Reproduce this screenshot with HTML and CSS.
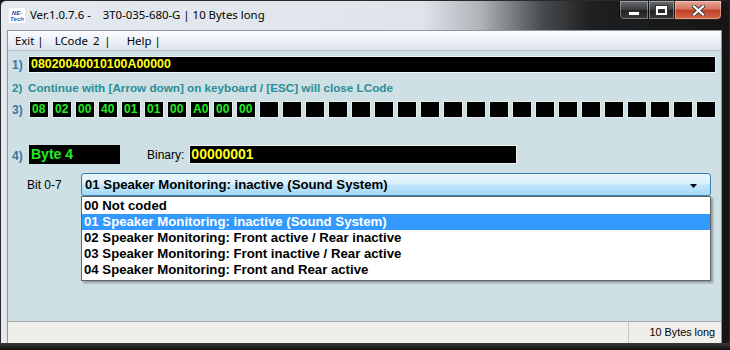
FILE: index.html
```html
<!DOCTYPE html>
<html>
<head>
<meta charset="utf-8">
<link rel="stylesheet" href="styles.css">
</head>
<body>
<div class="win">
  <div class="titlebar">
    <div class="logo"><span class="l1">NE-</span><span class="l2">Tech</span></div>
    <div class="title">Ver.1.0.7.6 -&nbsp;&nbsp;&nbsp; 3T0-035-680-G | 10 Bytes long</div>
    <div class="capbtns">
      <div class="cb cb-min"><span class="g-min"></span></div>
      <div class="cb cb-max"><span class="g-max"></span></div>
      <div class="cb cb-close">
        <svg width="13" height="11" viewBox="0 0 13 11"><path d="M2 1.5 L11 9.5 M11 1.5 L2 9.5" stroke="#3a3a3a" stroke-width="4" stroke-linecap="square"/><path d="M2 1.5 L11 9.5 M11 1.5 L2 9.5" stroke="#ffffff" stroke-width="2.2" stroke-linecap="square"/></svg>
      </div>
    </div>
  </div>
  <div class="client">
    <div class="menubar">
      <span class="mi mi-exit">Exit |</span>
      <span class="mi mi-lcode">LCode 2 |</span>
      <span class="mi">Help |</span>
    </div>
    <div class="content">
      <div class="row r1">
        <span class="lbl">1)</span>
        <div class="field hex">08020040010100A00000</div>
      </div>
      <div class="row r2">
        <span class="lbl info">2)</span>
        <span class="info">Continue with [Arrow down] on keyboard / [ESC] will close LCode</span>
      </div>
      <div class="row r3">
        <span class="lbl">3)</span>
        <div class="bytes" id="bytes"></div>
      </div>
      <div class="row r4">
        <span class="lbl l4">4)</span>
        <div class="bytebox">Byte 4</div>
        <span class="binlbl">Binary:</span>
        <div class="field binfield">00000001</div>
      </div>
      <div class="row r5">
        <span class="bitlbl">Bit 0-7</span>
        <div class="combo">
          <span>01 Speaker Monitoring: inactive (Sound System)</span>
          <svg class="arrow" width="7" height="4" viewBox="0 0 7 4"><path d="M0 0 H7 L3.5 4 Z" fill="#000"/></svg>
          <div class="list">
            <div class="opt">00 Not coded</div>
            <div class="opt sel">01 Speaker Monitoring: inactive (Sound System)</div>
            <div class="opt">02 Speaker Monitoring: Front active / Rear inactive</div>
            <div class="opt">03 Speaker Monitoring: Front inactive / Rear active</div>
            <div class="opt">04 Speaker Monitoring: Front and Rear active</div>
          </div>
        </div>
      </div>
    </div>
    <div class="statusbar">
      <div class="sp1"></div>
      <div class="sp2">10 Bytes long</div>
    </div>
  </div>
  <div class="bottomframe"></div>
</div>
<script src="app.js"></script>
</body>
</html>
```
FILE: app.js
```js
var vals = ["08","02","00","40","01","01","00","A0","00","00"];
var c = document.getElementById("bytes");
for (var i = 0; i < 30; i++) {
  var d = document.createElement("div");
  d.className = "bx";
  d.textContent = vals[i] || "";
  c.appendChild(d);
}
```
FILE: styles.css
```css
html, body { margin: 0; padding: 0; }
body { width: 730px; height: 350px; background: #1a1a1a; overflow: hidden; }

.win {
  width: 730px; height: 350px;
  display: flex; flex-direction: column;
  box-sizing: border-box;
  border: 1px solid #2a2a2a;
  border-radius: 6px 6px 0 0;
  background: linear-gradient(to right, #e3e9ef 0, #dfe5eb 420px, #aeb3b8 480px, #4a4d50 540px, #1e1f20 590px, #151515 100%);
}

.titlebar {
  height: 29px; flex: none;
  display: flex; align-items: flex-start;
  position: relative;
}
.logo {
  width: 16px; height: 15px;
  margin: 7px 0 0 8px;
  background: #fff;
  display: flex; flex-direction: column; align-items: center; justify-content: center;
  font-family: "Liberation Sans", sans-serif; font-style: italic; font-weight: bold;
  font-size: 6px; line-height: 6px; color: #1f3fb0;
}
.logo .l2 { color: #2a5ac8; }
.title {
  margin: 6px 0 0 5px;
  font-family: "Noto Sans", sans-serif; font-size: 11.4px; line-height: 16px;
  color: #000;
  white-space: nowrap;
}
.capbtns {
  margin-left: auto; margin-right: 7px;
  display: flex; height: 20px;
}
.cb {
  height: 19px;
  box-sizing: border-box;
  border: 1px solid rgba(0,0,0,0.8);
  border-top: none;
  box-shadow: inset 0 0 0 1px rgba(255,255,255,0.35);
  display: flex; align-items: center; justify-content: center;
}
.cb-min { width: 29px; border-radius: 0 0 0 5px; background: linear-gradient(#6a6d70, #3a3c3e 50%, #222 52%, #35373a); border-right: none; }
.cb-max { width: 26px; background: linear-gradient(#6a6d70, #3a3c3e 50%, #222 52%, #35373a); border-right: none; }
.cb-close { width: 48px; border-radius: 0 0 5px 0; background: linear-gradient(#e8a898, #d47560 45%, #c0402a 52%, #d46a4c); }
.g-min { display: block; width: 10px; height: 3px; background: #fff; border: 1px solid #333; margin-top: 7px; }
.g-max { display: block; width: 7px; height: 4px; border: 2px solid #fff; border-top-width: 3px; outline: 1px solid #333; }

.client {
  flex: 1;
  margin: 0 7px 0 6px;
  display: flex; flex-direction: column;
  border: 1px solid #8c96a0;
  border-bottom: none;
  background: #cee0e3;
}
.menubar {
  height: 19px; flex: none;
  background: linear-gradient(#fbfcfe, #e9eef6 60%, #dbe3ee);
  border-bottom: 1px solid #b9c4cf;
  display: flex; align-items: center;
  padding-left: 7px;
  font-family: "Noto Sans", sans-serif; font-size: 11.4px; color: #000;
}
.mi { margin-right: 14px; }
.mi-exit { margin-right: 11px; }
.mi-lcode { margin-right: 16px; word-spacing: 2px; }

.content {
  flex: 1;
  position: relative;
  padding: 5px 5px 0 4px;
  font-family: "Liberation Sans", Arial, sans-serif;
}
.row { display: flex; align-items: center; }
.lbl {
  width: 16px; flex: none;
  font-weight: bold; font-size: 12px; color: #3f70a8;
}
.field {
  box-sizing: border-box;
  background: #000;
  border: 1px solid #eef2f3;
  font-weight: bold;
  color: #ffff1a;
}
.r1 { height: 17px; }
.hex { flex: 1; height: 17px; font-size: 12.4px; line-height: 15px; padding-left: 2px; }
.r2 { height: 16px; margin-top: 6px; }
.info { font-weight: bold; font-size: 11.7px; color: #2a8e98; }
.r3 { height: 17px; margin-top: 6px; }
.bytes { display: flex; gap: 3px; margin-left: 1px; }
.bx {
  width: 20px; height: 17px; box-sizing: border-box;
  background: #000; border: 1px solid #e6ecee;
  color: #22ee22; font-weight: bold; font-size: 12px; line-height: 15px;
  padding-left: 2px;
}
.r4 { height: 19px; margin-top: 27px; align-items: flex-end; }
.l4 { margin-bottom: 1px; }
.bytebox {
  width: 91px; height: 19px; margin-left: 1px; box-sizing: border-box;
  background: #000; color: #22ee22;
  font-weight: bold; font-size: 14px; line-height: 19px; padding-left: 2px;
}
.binlbl { margin-left: 27px; margin-right: 5px; font-size: 12px; color: #000; align-self: center; }
.binfield { width: 328px; height: 19px; font-size: 14px; line-height: 17px; padding-left: 1px; align-self: flex-start; }
.r5 { height: 23px; margin-top: 9px; }
.bitlbl { width: 54px; margin-left: 15px; font-size: 12px; color: #000; }
.combo {
  position: relative;
  width: 630px; height: 23px; box-sizing: border-box;
  border: 1px solid #3c7fb1; border-radius: 3px;
  background: linear-gradient(#eaf6fd, #d9f0fc 48%, #bee6fd 52%, #a7d9f5);
  display: flex; align-items: center;
  padding-left: 3px;
  font-size: 13.2px; font-weight: bold; color: #000;
}
.arrow { position: absolute; right: 13px; top: 10px; }
.list {
  position: absolute; left: -1px; top: 22px;
  width: 630px; box-sizing: border-box;
  background: #fff;
  border: 1px solid #646464;
  box-shadow: 2px 2px 2px rgba(0,0,0,0.3);
  padding: 1px 0 2px;
}
.opt { height: 16px; line-height: 16px; font-size: 13.2px; font-weight: bold; color: #000; padding-left: 2px; white-space: nowrap; }
.opt.sel { background: #3399ff; color: #fff; }

.statusbar {
  height: 21px; flex: none;
  display: flex;
  background: #f0eeeb;
  border-top: 1px solid #a9a9a9;
  font-family: "Liberation Sans", Arial, sans-serif; font-size: 10.8px;
}
.sp1 { flex: 1; border-right: 1px solid #c8c6c2; }
.sp2 { width: 92px; text-align: right; padding-right: 6px; line-height: 20px; box-sizing: border-box; }
.bottomframe {
  height: 7px; flex: none;
  background: linear-gradient(#3a3a3a, #111);
  margin: 0 -1px -1px;
}
```
